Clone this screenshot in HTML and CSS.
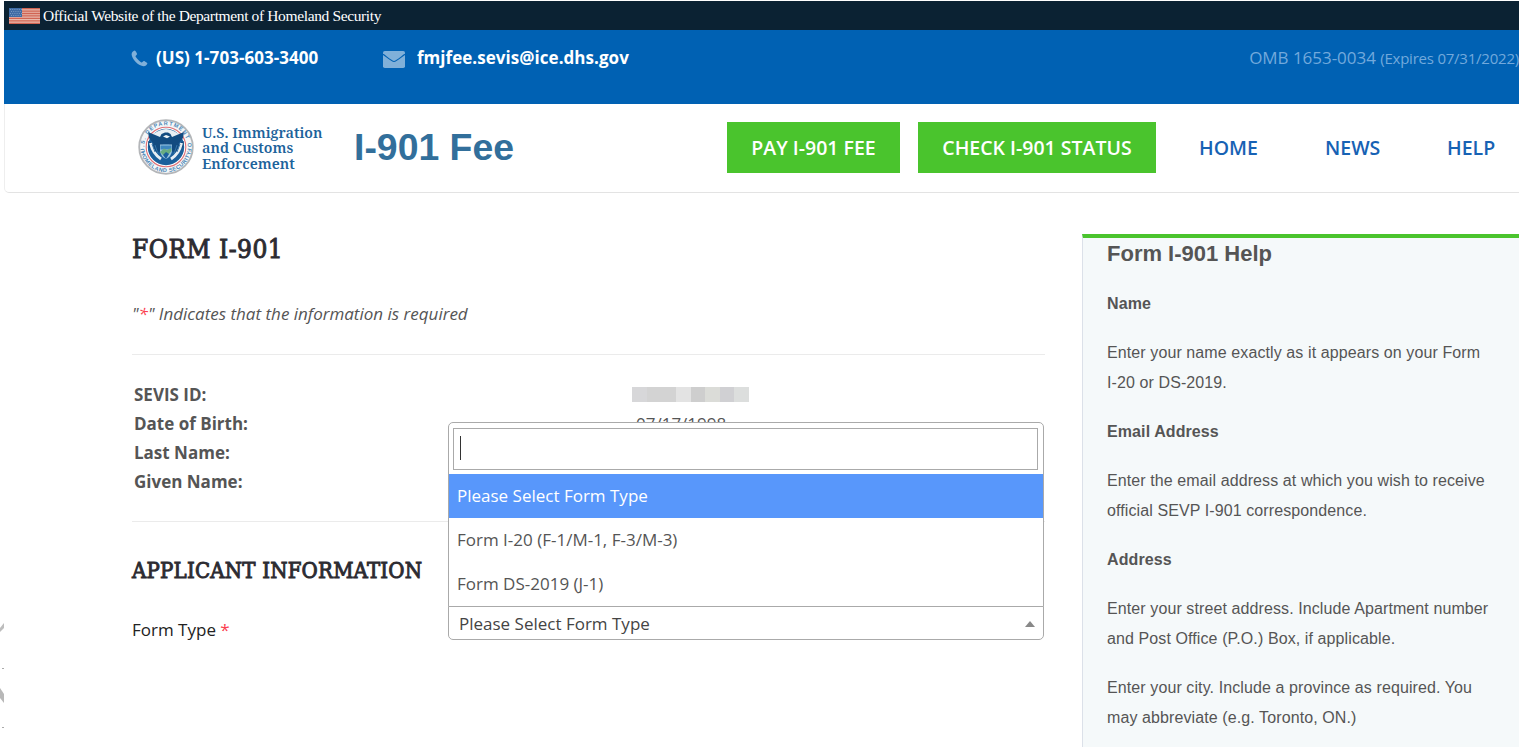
FILE: index.html
```html
<!DOCTYPE html>
<html lang="en">
<head>
<meta charset="utf-8">
<title>Form I-901</title>
<link rel="stylesheet" href="styles.css">
</head>
<body>
<div class="page">
  <div class="gov-bar">
    <svg class="flag" width="31" height="16" viewBox="0 0 31 16">
      <rect width="31" height="16" fill="#e9b9ac"/>
      <path d="M0 .7H31M0 3.1H31M0 5.5H31M0 7.9H31M0 10.4H31M0 12.9H31M0 15.3H31" stroke="#d06453" stroke-width="1.3"/>
      <rect width="13" height="9" fill="#3f6ca5"/>
      <path d="M1 1.5H13M2 3.5H13M1 5.5H13M2 7.5H13" stroke="#87a5c9" stroke-width=".8" stroke-dasharray="1 1.2"/>
    </svg>
    <span class="gov-text">Official Website of the Department of Homeland Security</span>
  </div>
  <div class="contact-bar">
    <svg class="phone" width="17" height="17" viewBox="0 0 17 17"><path fill="#80b0d9" d="M3.7.6C2.3.8.7 2.300.6 4.200.7 6.500 2.200 9.400 4.700 12 7.100 14.400 10.400 16.300 12.700 16.200 14.700 16.100 16.200 14.600 16.400 13.200 16.400 12.700 13.600 11 12.900 10.900 12.200 10.800 11.400 12.500 10.600 12.500 9.200 12.100 4.900 7.800 4.500 6.200 4.500 5.600 6.100 4.900 6.100 4.100 6 3.300 4.400.5 3.700.6Z"/></svg>
    <span class="tel">(US) 1-703-603-3400</span>
    <svg class="mail" width="22" height="17" viewBox="0 0 22 17"><rect width="22" height="17" rx="1.8" fill="#80b0d9"/><path d="M0 3.200C4.500 6.500 8.800 10.500 11 10.500S17.500 6.500 22 3.200" fill="none" stroke="#0061b3" stroke-width="1.2"/></svg>
    <span class="email">fmjfee.sevis@ice.dhs.gov</span>
    <span class="omb">OMB 1653-0034 <small>(Expires 07/31/2022)</small></span>
  </div>
  <header class="site-header">
    <svg class="seal" width="56" height="56" viewBox="0 0 56 56">
      <defs>
        <path id="arc-top" d="M6.800 33A21.800 21.800 0 1 1 49.200 33"/>
        <path id="arc-bottom" d="M2.800 31A25.400 25.400 0 0 0 53.200 31"/>
      </defs>
      <circle cx="28" cy="28" r="26.800" fill="#f4f6f8" stroke="#b4b6b9" stroke-width="1.800"/>
      <circle cx="28" cy="28" r="19.800" fill="#fff" stroke="#df7278" stroke-width="1.100"/>
      <circle cx="28" cy="28" r="18.200" fill="#1a5f9b"/>
      <path d="M12 17Q22 10 28 10T44 17L33 20H23Z" fill="#e8eff4"/>
      <path d="M10 13 22 18 23.500 15 27 13.500H30L32.500 15 34 18 46 13 45 19 40 25 46 22 45 28 40 34 33 32 31 25H25L23 32 16 34 11 28 10 22 16 25 11 19Z" fill="#124b80"/>
      <path d="M12.500 24Q15 35 23 40M43.500 24Q41 35 33 40" fill="none" stroke="#e6eef4" stroke-width="3"/>
      <path d="M14 25 17 33M17 26 20 35M42 25 39 33M39 26 36 35" stroke="#3474a8" stroke-width="1"/>
      <path d="M25 17.500 28 16 32 17.500 29 19.300Z" fill="#eef4f7"/>
      <path d="M22 25.500H34V32Q33.500 37 28 40 22.500 37 22 32Z" fill="#9cc4de"/>
      <path d="M22.500 26.500H33.500V30.500H22.500Z" fill="#3d87bf"/>
      <path d="M22 33 26 29.500 29 31 33 29 33.500 32 30 36H25Z" fill="#68ad81"/>
      <path d="M25 36 28 33 31 35 28 40Z" fill="#1b609e"/>
      <g class="seal-text"><text><textPath href="#arc-top" textLength="78">U.S. DEPARTMENT OF</textPath></text>
      <text><textPath href="#arc-bottom" startOffset="2" textLength="69">HOMELAND SECURITY</textPath></text></g>
    </svg>
    <div class="agency"><span>U.S. Immigration</span><span>and Customs</span><span>Enforcement</span></div>
    <div class="brand">I-901 Fee</div>
    <nav class="nav">
      <a class="btn pay">PAY I-901 FEE</a>
      <a class="btn check">CHECK I-901 STATUS</a>
      <a class="link home">HOME</a>
      <a class="link news">NEWS</a>
      <a class="link help-link">HELP</a>
    </nav>
  </header>
  <div class="content">
    <div class="edge">
      <svg width="4" height="137" viewBox="0 0 4 137"><path d="M0 18 4 13V18L0 22Z" fill="#bdbdbd"/><path d="M0 78 4 84V93L0 88Z" fill="#b8b8b8"/><path d="M2 58H4V59H2ZM2 117H4V118H2Z" fill="#aaa"/></svg>
    </div>
    <main class="form">
      <h1>FORM I-901</h1>
      <p class="note">"<b>*</b>" Indicates that the information is required</p>
      <dl class="facts">
        <dt>SEVIS ID:</dt><dd class="mask"><i></i><i></i><i></i><i></i><i></i><i></i><i></i><i></i></dd>
        <dt>Date of Birth:</dt><dd>07/17/1998</dd>
        <dt>Last Name:</dt><dd></dd>
        <dt>Given Name:</dt><dd></dd>
      </dl>
      <h2>APPLICANT INFORMATION</h2>
      <div class="field">
        <label>Form Type <b>*</b></label>
        <div class="select">
          <div class="menu">
            <div class="search"><span class="caret"></span></div>
            <div class="option active">Please Select Form Type</div>
            <div class="option">Form I-20 (F-1/M-1, F-3/M-3)</div>
            <div class="option">Form DS-2019 (J-1)</div>
          </div>
          <span>Please Select Form Type</span>
          <svg width="10" height="6" viewBox="0 0 10 6"><path d="M0 6 5 0 10 6Z" fill="#888"/></svg>
        </div>
      </div>
    </main>
    <aside class="help">
      <h3>Form I-901 Help</h3>
      <h4>Name</h4>
      <p>Enter your name exactly as it appears on your Form<br>I-20 or DS-2019.</p>
      <h4>Email Address</h4>
      <p>Enter the email address at which you wish to receive<br>official SEVP I-901 correspondence.</p>
      <h4>Address</h4>
      <p>Enter your street address. Include Apartment number<br>and Post Office (P.O.) Box, if applicable.</p>
      <p>Enter your city. Include a province as required. You<br>may abbreviate (e.g. Toronto, ON.)</p>
    </aside>
  </div>
</div>
</body>
</html>
```
FILE: styles.css
```css
* { box-sizing: border-box; }
body { margin: 0; background: #fff; color: #555; font: 17px/29px "Open Sans", sans-serif; overflow: hidden; }
.page { height: 747px; padding-top: 1px; overflow: hidden; white-space: nowrap; }
.page svg { display: block; flex: none; }

.gov-bar { display: flex; height: 29px; margin-left: 4px; padding: 7px 0 0 5px; background: #0b2233; color: #fff; }
.gov-text { margin-left: 3px; font: 15.5px/16px "Liberation Serif", serif; letter-spacing: -0.37px; }

.contact-bar { display: flex; align-items: flex-start; height: 74px; margin-left: 4px; padding: 13px 0 0 127px; background: #0061b3; color: #fff; font-weight: 700; line-height: 30px; letter-spacing: 0.04px; }
.phone { margin-top: 7px; }
.tel { width: 227px; margin-left: 8px; }
.mail { margin-top: 8px; }
.email { margin-left: 12px; }
.omb { margin: 0 0 0 auto; color: #72a9dc; font-weight: 400; letter-spacing: -0.04px; }
.omb small { font-size: 15px; letter-spacing: -0.22px; }

.site-header { display: flex; height: 89px; margin-left: 4px; padding-left: 133px; border-bottom: 1px solid #e3e3e3; border-left: 1px solid #eee; border-radius: 0 0 0 5px; }
.seal { margin-top: 15px; }
.seal-text { font: 700 5.5px "Liberation Sans", sans-serif; fill: #4a86b6; }
.agency { display: flex; flex-direction: column; width: 152px; margin: 20.5px 0 0 8px; color: #1d639b; font: 600 14.4px/15.5px "Noto Serif", "Liberation Serif", serif; }
.brand { color: #326f9b; font: 700 37.4px/86px "Liberation Sans", sans-serif; }
.nav { display: flex; align-items: flex-start; margin: 18px 0 0 auto; color: #1762b4; font-size: 19.5px; font-weight: 600; line-height: 51px; }
.btn { background: #4ac42d; color: #fff; text-align: center; }
.pay { width: 173px; }
.check { width: 238px; margin-left: 18px; }
.home { width: 126px; margin-left: 43px; }
.news { width: 122px; }
.help-link { width: 72px; }

.content { display: flex; height: 554px; }
.edge { width: 132px; padding-top: 417px; }
.form { width: 913px; padding-top: 39px; }
h1, h2 { margin: 0; color: #2c2b31; font: 400 26px/34px "Roboto Slab", "DejaVu Serif Condensed", "DejaVu Serif", serif; letter-spacing: 0.5px; -webkit-text-stroke: 0.9px #2c2b31; }
.note { margin: 33px 0 0; height: 56px; border-bottom: 1px solid #ebebeb; font-style: italic; }
.note b, label b { color: #fb3e4e; font-weight: 400; }
.facts { display: grid; grid-template-columns: 502px 1fr; grid-auto-rows: 29.2px; height: 167px; margin: 0; padding: 24.5px 0 0 2px; border-bottom: 1px solid #ebebeb; }
dt { font-weight: 700; }
dd { margin: 0; }
.mask { display: flex; height: 15px; width: 117px; margin: 7.5px 0 0 -4px; }
.mask i { flex: 1; background: #d7d7d9; }
.mask i:nth-child(2), .mask i:nth-child(3) { background: #d3d3d3; }
.mask i:nth-child(4) { background: #e3e3e3; }
.mask i:nth-child(5) { background: #cecece; }
.mask i:nth-child(6) { background: #dbdcd8; }
.mask i:nth-child(7) { background: #d0d0d3; }
.mask i:nth-child(8) { background: #dcdedd; }
h2 { margin-top: 32px; font-size: 22px; letter-spacing: 0.2px; }
.field { display: flex; margin-top: 18px; }
label { width: 316px; padding-top: 9px; color: #222; }
.select { position: relative; display: flex; justify-content: space-between; width: 596px; height: 34px; padding: 2px 8px 0 10px; border: 1px solid #aaa; border-radius: 0 0 5px 5px; color: #444; }
.select > svg { margin-top: 12px; }
.menu { position: absolute; left: -1px; bottom: 32px; width: 596px; height: 185px; padding-top: 5px; border: 1px solid #aaa; border-radius: 5px 5px 0 0; background: #fff; color: #555; }
.search { width: 585px; height: 42px; margin: 0 0 4px 4px; padding: 7px 0 0 6px; border: 1px solid #aaa; }
.caret { display: block; width: 1px; height: 24px; background: #333; }
.option { height: 44px; padding-left: 8px; line-height: 44px; }
.active { background: #5897fb; color: #fff; }

.help { flex: 1; height: 513px; margin: 41px 0 0 37px; padding: 1px 0 0 24px; border-top: 4px solid #4ac42d; border-left: 1px solid #dce1e9; background: #f5f9fa; font: 16px/30px "Liberation Sans", sans-serif; letter-spacing: 0.1px; }
.help h3 { margin: 0; font-size: 22px; line-height: 30px; letter-spacing: 0; }
.help h4 { margin: 19px 0; font-size: 16px; line-height: 30px; }
.help h3 + h4 { margin-top: 19.500px; }
.help p { margin: 19px 0; }
```
